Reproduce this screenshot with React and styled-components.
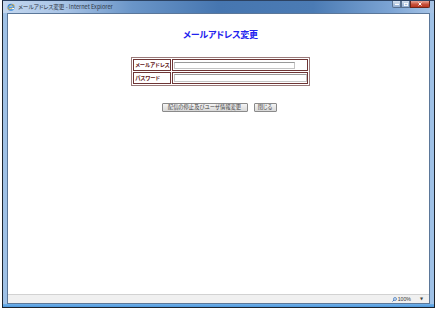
import styled, { createGlobalStyle } from "styled-components";

const GlobalStyle = createGlobalStyle`
  html, body {
    margin: 0;
    padding: 0;
    background: #fff;
  }
  body {
    font-family: "Noto Sans CJK JP", "Liberation Sans", sans-serif;
  }
`;

const Window = styled.div`
  margin-left: 2px;
  width: 433px;
  height: 308px;
  box-sizing: border-box;
  border: 1px solid #1b222c;
  border-top-color: #2c4262;
  display: flex;
  flex-direction: column;
  background: #9fc1e6;
`;

const TitleBar = styled.div`
  height: 12px;
  display: flex;
  align-items: center;
  padding-left: 4px;
  background: linear-gradient(
    to right,
    #c3d7ef 0%,
    #a9c4e6 14%,
    #6a95c8 30%,
    #4676b0 50%,
    #4b7bb4 72%,
    #7ca4d4 90%,
    #a7c4e6 100%
  );
`;

const Title = styled.span`
  margin-left: 3px;
  font-size: 5.6px;
  line-height: 8px;
  color: #2a3442;
  font-feature-settings: "palt";
  white-space: nowrap;
`;

const Controls = styled.div`
  margin-left: auto;
  margin-right: 4px;
  align-self: flex-start;
  display: flex;
`;

const Ctrl = styled.div`
  width: ${(p) => p.$w}px;
  height: 7px;
  box-sizing: border-box;
  border: 1px solid ${(p) => (p.$close ? "#6b2418" : "#58708f")};
  border-top: none;
  background: ${(p) =>
    p.$close
      ? "linear-gradient(#e9a697, #c8503a 55%, #b9361f)"
      : "linear-gradient(#d6e2f1, #adc2dd 55%, #93aed2)"};
  display: flex;
  align-items: center;
  justify-content: center;
  border-radius: ${(p) => p.$radius || "0"};
`;

const Frame = styled.div`
  flex: 1;
  display: flex;
  padding: 0 4px;
  min-height: 0;
`;

const Panel = styled.div`
  flex: 1;
  border: 1px solid #5b7799;
  background: #fff;
  display: flex;
  flex-direction: column;
`;

const Page = styled.div`
  flex: 1;
  padding: 15px 0 0 4px;
  display: flex;
  flex-direction: column;
  align-items: center;
`;

const Heading = styled.h1`
  margin: 0;
  font-size: 9px;
  line-height: 12px;
  font-weight: 700;
  color: #2222ee;
  letter-spacing: -0.2px;
  font-feature-settings: "palt";
`;

const FormTable = styled.table`
  margin-top: 16px;
  width: 176px;
  border: 1px solid #9a7a7a;
  border-spacing: 1px;
`;

const LabelCell = styled.td`
  width: 36px;
  height: 10px;
  padding: 0 0 0 1px;
  border: 1px solid #6e3535;
  font-size: 5.3px;
  line-height: 10px;
  font-weight: 700;
  color: #5e1414;
  font-feature-settings: "palt";
  white-space: nowrap;
`;

const FieldCell = styled.td`
  height: 10px;
  padding: 0;
  border: 1px solid #6e3535;
  vertical-align: middle;
`;

const Field = styled.input`
  display: block;
  box-sizing: border-box;
  width: ${(p) => p.$w}px;
  height: ${(p) => p.$h}px;
  margin: 0 0 0 1px;
  padding: 0;
  border: 1px solid #c4c4c4;
  border-top-color: #9a9a9a;
  background: #fff;
  outline: none;
`;

const Actions = styled.div`
  margin-top: 17px;
  margin-right: 3px;
  display: flex;
  gap: 6px;
`;

const Button = styled.button`
  width: ${(p) => p.$w}px;
  height: 9px;
  box-sizing: border-box;
  padding: 0;
  border: 1px solid #8a8a8a;
  border-radius: 1px;
  background: linear-gradient(#f4f4f4, #e6e6e6 50%, #d9d9d9);
  font-family: "Noto Sans CJK JP", sans-serif;
  font-size: 5.3px;
  line-height: 7px;
  color: #444;
  font-feature-settings: "palt";
  white-space: nowrap;
`;

const StatusBar = styled.div`
  height: 8px;
  border-top: 1px solid #d2d2d2;
  background: #f0f0f0;
  display: flex;
  align-items: center;
  justify-content: flex-end;
  padding-right: 6px;
  gap: 1px;
`;

const Zoom = styled.span`
  font-family: "Liberation Sans", sans-serif;
  font-size: 5.2px;
  line-height: 8px;
  color: #333;
  margin-right: 8px;
`;

const Arrow = styled.span`
  font-family: "DejaVu Sans", sans-serif;
  font-size: 4px;
  line-height: 8px;
  color: #444;
`;

const BottomEdge = styled.div`
  height: 3px;
  background: linear-gradient(#6fb0e9, #4f98dc);
`;

const IeIcon = () => (
  <svg width="8" height="8" viewBox="0 0 16 16">
    <circle cx="8" cy="8.5" r="5.5" fill="none" stroke="#2f86dd" strokeWidth="3" />
    <rect x="4" y="7.5" width="9" height="2" fill="#2f86dd" />
    <rect x="9" y="10" width="5" height="2.5" fill="#fff" />
    <ellipse cx="8" cy="8" rx="7.5" ry="3.2" fill="none" stroke="#f1b431" strokeWidth="1.3" transform="rotate(-35 8 8)" />
  </svg>
);

const Magnifier = () => (
  <svg width="5" height="5" viewBox="0 0 10 10">
    <circle cx="6" cy="4" r="3" fill="#cfe3f7" stroke="#3a6fb3" strokeWidth="1.4" />
    <line x1="3.8" y1="6.2" x2="1" y2="9" stroke="#3a6fb3" strokeWidth="2" />
  </svg>
);

const App = () => {
  return (
    <>
      <GlobalStyle />
      <Window>
        <TitleBar>
          <IeIcon />
          <Title>メールアドレス変更 - Internet Explorer</Title>
          <Controls>
            <Ctrl $w={9} $radius="0 0 0 2px">
              <svg width="4" height="2" viewBox="0 0 4 2">
                <rect width="4" height="1.2" y="0.8" fill="#fff" />
              </svg>
            </Ctrl>
            <Ctrl $w={9}>
              <svg width="4" height="3" viewBox="0 0 4 3">
                <rect x="0.4" y="0.4" width="3.2" height="2.2" fill="none" stroke="#fff" strokeWidth="0.8" />
              </svg>
            </Ctrl>
            <Ctrl $w={20} $close $radius="0 0 2px 0">
              <svg width="4" height="4" viewBox="0 0 4 4">
                <path d="M0.5 0.5 L3.5 3.5 M3.5 0.5 L0.5 3.5" stroke="#fff" strokeWidth="1" />
              </svg>
            </Ctrl>
          </Controls>
        </TitleBar>

        <Frame>
          <Panel>
            <Page>
              <Heading>メールアドレス変更</Heading>

              <FormTable>
                <tbody>
                  <tr>
                    <LabelCell>メールアドレス</LabelCell>
                    <FieldCell>
                      <Field type="text" $w={121} $h={7} />
                    </FieldCell>
                  </tr>
                  <tr>
                    <LabelCell>パスワード</LabelCell>
                    <FieldCell>
                      <Field type="password" $w={133} $h={8} />
                    </FieldCell>
                  </tr>
                </tbody>
              </FormTable>

              <Actions>
                <Button $w={86}>配信の停止及びユーザ情報変更</Button>
                <Button $w={23}>閉じる</Button>
              </Actions>
            </Page>

            <StatusBar>
              <Magnifier />
              <Zoom>100%</Zoom>
              <Arrow>▼</Arrow>
            </StatusBar>
          </Panel>
        </Frame>

        <BottomEdge />
      </Window>
    </>
  );
};

export default App;
